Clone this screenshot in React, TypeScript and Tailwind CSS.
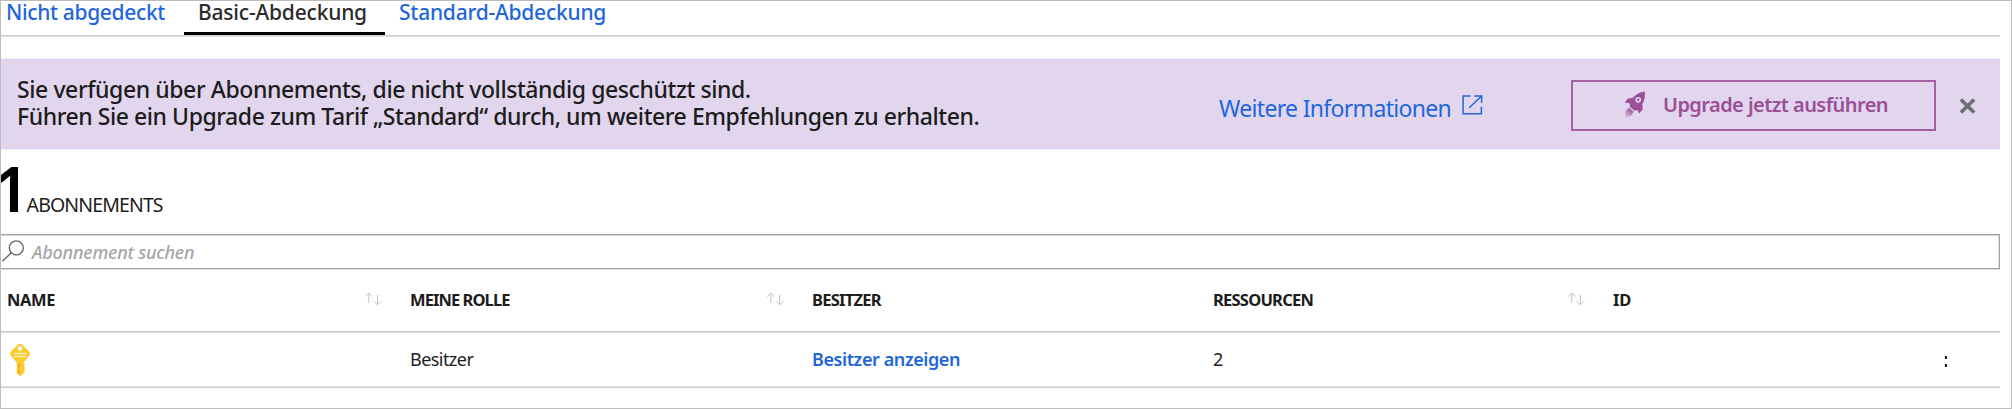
import type { ReactNode } from "react";

function SortArrows() {
  return (
    <svg className="relative -top-[1.5px] h-[14px] w-[19px]" viewBox="0 0 19 14" fill="none" stroke="#c4c4c4" strokeWidth="1">
      <path d="M4.8 11V1.2M1.2 4.6L4.8 1.1L8.4 4.6M13.5 3V12.6M9.6 9.2L13.5 12.8L17.4 9.2" />
    </svg>
  );
}

function SearchIcon() {
  return (
    <svg className="h-[24px] w-[24px] shrink-0" viewBox="0 0 24 24" fill="none" stroke="#696969" strokeWidth="1.4">
      <circle cx="15.3" cy="8.9" r="7" />
      <path d="M10.3 13.8L1.5 22.2" />
    </svg>
  );
}

function ExternalIcon() {
  return (
    <svg className="h-[20px] w-[21px]" viewBox="0 0 21 20" fill="none" stroke="#1f66dc" strokeWidth="1.5">
      <path d="M8.6 1.1H1.1V18.8H19.4V11.8M12.2 1.1H19.6V7.9M19.4 1.3L7.2 12.8" />
    </svg>
  );
}

function RocketIcon() {
  return (
    <svg className="h-[28px] w-[22px]" viewBox="0 0 22 28">
      <defs>
        <linearGradient id="flame" x1="0.8" y1="0" x2="0.1" y2="1">
          <stop offset="0" stopColor="#9b4f96" />
          <stop offset="0.45" stopColor="#b77fb6" />
          <stop offset="1" stopColor="#b77fb6" stopOpacity="0.15" />
        </linearGradient>
      </defs>
      <path
        fill="#9b4f96"
        fillRule="evenodd"
        d="M20.8 0.4C21.4 4.6 20.6 9.4 18.3 13L18.7 18.4L15 22.6L13.4 19L10.4 19.8L5.8 15.8L6 12.6L1 11.6L3.8 7.4L8.6 7C11.2 3.4 15.6 1 20.8 0.4ZM14.2 5.9A2.9 2.9 0 1 0 14.2 11.7A2.9 2.9 0 1 0 14.2 5.9Z"
      />
      <circle cx="14.2" cy="8.8" r="1.2" fill="#9b4f96" />
      <path fill="url(#flame)" d="M5.2 16.8L9.3 20.5C8.8 23.6 5.6 26 1.2 27C0.4 22.6 1.8 18.6 5.2 16.8Z" />
    </svg>
  );
}

function CloseIcon() {
  return (
    <svg className="h-[16px] w-[17px]" viewBox="0 0 17 16" fill="none" stroke="#6b7073" strokeWidth="3.6">
      <path d="M1.9 1.4L15.1 14.6M15.1 1.4L1.9 14.6" />
    </svg>
  );
}

function KeyIcon() {
  return (
    <svg className="h-[34px] w-[22px]" viewBox="0 0 22 34">
      <path
        fill="#fdcb2e"
        fillRule="evenodd"
        d="M9.3 1.3Q11 0 12.7 1.3L20.4 8.8Q21.6 10.6 20.4 12.4L14.6 19.4V20.6H15.6V22.6L14.8 23.4L15.8 24.4V26L14.8 26.8L15.8 27.8V29L11.2 33.2L7.8 30.2V19.4L1.6 12.4Q0.4 10.6 1.6 8.8ZM11 3.2A2.3 2.3 0 1 0 11 7.8A2.3 2.3 0 1 0 11 3.2Z"
      />
      <path fill="#f5b01c" d="M9 20H10.6V31.6L9 30.4Z" />
      <path stroke="#fdeeb4" strokeWidth="1.5" d="M4.8 10.6H17.2M4.8 13.4H17.2" />
    </svg>
  );
}

function HeaderCell({ label, tracking, sortable }: { label: string; tracking: string; sortable?: boolean }) {
  return (
    <div className="flex items-center justify-between pr-[27px]">
      <span className={`text-[16.5px] font-bold ${tracking}`}>{label}</span>
      {sortable && <SortArrows />}
    </div>
  );
}

function Row({ className, children }: { className: string; children: ReactNode }) {
  return <div className={`grid grid-cols-[403px_402px_401px_400px_1fr] items-center pl-[6px] ${className}`}>{children}</div>;
}

export default function App() {
  return (
    <div className="h-[409px] w-[2012px] overflow-hidden border border-[#bdbdbd] bg-white pr-[11px] font-['Noto_Sans','Open_Sans',sans-serif] text-[#1c1c1c]">
      <nav className="flex h-[34px] text-[21px] leading-[22px] font-medium text-[#1f66dc]">
        <a className="w-[183px] pl-[5px] tracking-[-0.35px] whitespace-nowrap">Nicht abgedeckt</a>
        <a className="w-[201px] border-b-[3px] border-black pl-[14px] tracking-[-0.2px] whitespace-nowrap text-[#2b2b2b]">Basic-Abdeckung</a>
        <a className="pl-[14px] tracking-[-0.23px] whitespace-nowrap">Standard-Abdeckung</a>
      </nav>
      <div className="h-[2px] border-t border-[#cfcfcf] bg-[#e0e0e0]" />

      <section className="mt-[21px] flex h-[92px] items-start border-y border-[#f0eaf6] bg-[#e2d6ee]">
        <p className="mt-[17px] w-[1218px] pl-[16px] text-[23px] leading-[27px] font-medium whitespace-nowrap">
          <span className="block tracking-[-0.41px]">Sie verfügen über Abonnements, die nicht vollständig geschützt sind.</span>
          <span className="block tracking-[-0.44px]">Führen Sie ein Upgrade zum Tarif „Standard“ durch, um weitere Empfehlungen zu erhalten.</span>
        </p>
        <a className="mt-[34px] flex w-[352px] text-[23px] leading-[30px] text-[#1f66dc]">
          <span className="w-[243px] tracking-[-0.68px] whitespace-nowrap">Weitere Informationen</span>
          <span className="mt-[2px]">
            <ExternalIcon />
          </span>
        </a>
        <button className="mt-[21px] flex h-[51px] w-[365px] border-2 border-[#a560a1] pl-[51px] text-[20px] leading-[46px] font-semibold text-[#9b4f96]">
          <span className="mt-[9px] w-[39px]">
            <RocketIcon />
          </span>
          <span className="tracking-[-0.56px] whitespace-nowrap">Upgrade jetzt ausführen</span>
        </button>
        <button className="mt-[39px] ml-[23px]">
          <CloseIcon />
        </button>
      </section>

      <h1 className="mt-[6px] ml-[-8px] flex h-[64px] items-baseline">
        <span className="text-[64px] leading-[64px] font-semibold text-black">1</span>
        <span className="ml-[-3px] text-[19.5px] tracking-[-0.88px]">ABONNEMENTS</span>
      </h1>

      <div className="mt-[14px] flex h-[35px] border border-l-0 border-[#a3a3a3] shadow-[inset_0_1px_#d4d4d4,inset_-1px_0_#dedede,0_1px_#dadada]">
        <span className="mt-[4px] mr-[7px]">
          <SearchIcon />
        </span>
        <span className="text-[18px] leading-[34px] font-medium tracking-[-0.2px] text-[#a6a6a6] italic">Abonnement suchen</span>
      </div>

      <Row className="h-[62px]">
        <HeaderCell label="NAME" tracking="tracking-[-0.4px]" sortable />
        <HeaderCell label="MEINE ROLLE" tracking="tracking-[-0.93px]" sortable />
        <HeaderCell label="BESITZER" tracking="tracking-[-0.74px]" />
        <HeaderCell label="RESSOURCEN" tracking="tracking-[-0.78px]" sortable />
        <HeaderCell label="ID" tracking="tracking-[-0.2px]" />
      </Row>
      <div className="h-[2px] border-t border-[#cbcbcb] bg-[#dedede]" />
      <Row className="h-[53px] text-[18px]">
        <span className="pl-[2px]">
          <KeyIcon />
        </span>
        <span className="tracking-[-0.55px]">Besitzer</span>
        <a className="font-semibold tracking-[-0.41px] text-[#1f66dc]">Besitzer anzeigen</a>
        <span>2</span>
        <span className="flex flex-col gap-[5px] pt-[3px] pl-[332px]">
          <i className="h-[3px] w-[2px] bg-[#1c1c1c]" />
          <i className="h-[3px] w-[2px] bg-[#1c1c1c]" />
        </span>
      </Row>
      <div className="h-[2px] border-b border-[#cbcbcb] bg-[#e2e2e2]" />
    </div>
  );
}
